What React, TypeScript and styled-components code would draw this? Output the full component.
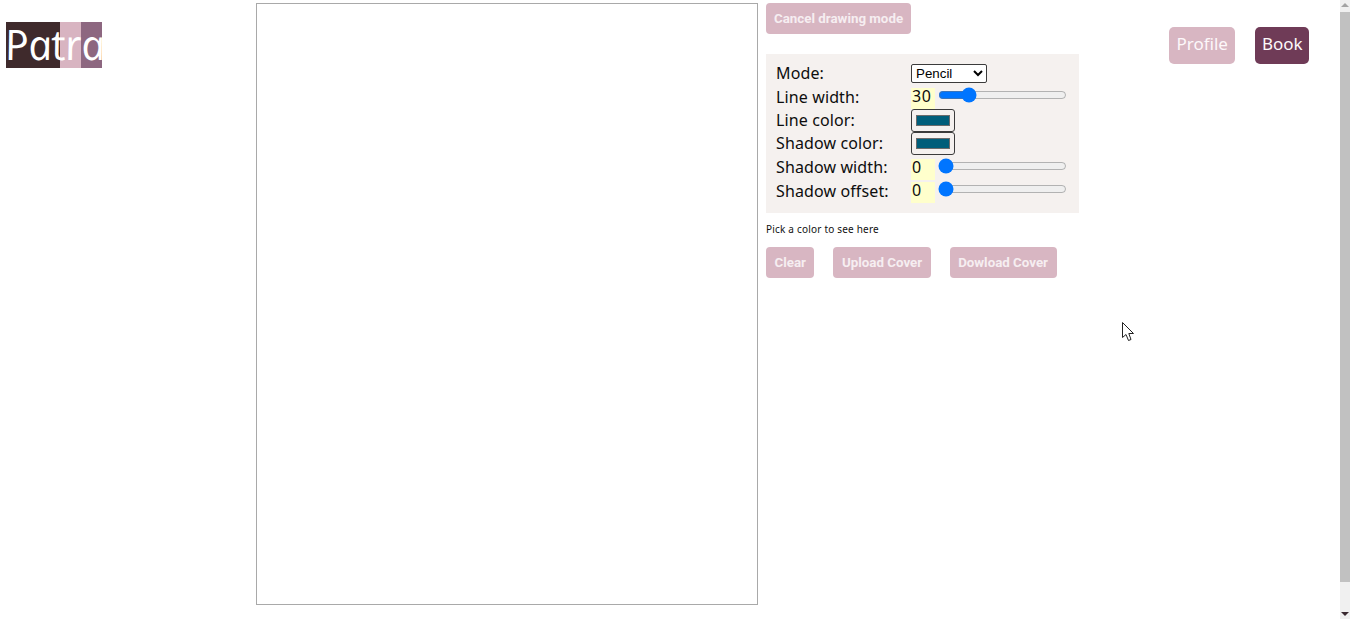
import React from "react";
import styled, { createGlobalStyle } from "styled-components";

const Global = createGlobalStyle`
  html, body { margin: 0; padding: 0; background: #fff; overflow: hidden; }
`;

const Page = styled.div`
  display: grid;
  grid-template-columns: 256px 502px 582px;
  width: 1340px;
  height: 619px;
`;

const LogoCell = styled.div`
  padding: 22px 0 0 6px;
`;

const Logo = styled.div`
  position: relative;
  display: flex;
  width: 96px;
  height: 46px;
`;

const Stripe = styled.div<{ $w: number; $c: string }>`
  width: ${(p) => p.$w}px;
  background: ${(p) => p.$c};
`;

const LogoText = styled.span`
  position: absolute;
  left: -2px;
  top: -4px;
  color: #fff;
  font: italic 400 42px/52px "Open Sans", sans-serif;
  letter-spacing: -0.4px;
  transform: skewX(11deg);
`;

const Canvas = styled.div`
  box-sizing: border-box;
  width: 502px;
  height: 602px;
  margin-top: 3px;
  border: 1px solid #a9a9a9;
  background: #fff;
`;

const Side = styled.div`
  display: grid;
  grid-template-columns: 403px 1fr;
  padding: 3px 0 0 8px;
  align-items: start;
`;

const Tools = styled.div`
  display: flex;
  flex-direction: column;
  align-items: flex-start;
`;

const ToolButton = styled.button`
  height: 31px;
  padding: 0 8px;
  border: 0;
  border-radius: 4px;
  background: #d8b6c2;
  color: #f6eef1;
  font: 700 13.33px "Roboto", sans-serif;
`;

const ActionButton = styled(ToolButton)`
  padding: 0 8.5px;
`;

const Panel = styled.div`
  box-sizing: border-box;
  width: 313px;
  height: 159px;
  margin-top: 20px;
  padding: 7.5px 10px 0;
  background: #f5f1ef;
`;

const Row = styled.div`
  display: grid;
  grid-template-columns: 135px 1fr;
  align-items: center;
  height: 23.5px;
`;

const Label = styled.label`
  color: #0d0d0d;
  font: 16px/23px "Noto Sans", sans-serif;
  letter-spacing: 0.12px;
`;

const Control = styled.div`
  display: flex;
  align-items: center;
`;

const ModeSelect = styled.select`
  box-sizing: border-box;
  width: 76px;
  height: 19px;
  margin-top: 1px;
  padding: 0;
  border: 1px solid #3b3b3b;
  border-radius: 2px;
  background: #fff;
  color: #000;
  font: 13.33px "Liberation Sans", sans-serif;
`;

const Value = styled.output`
  box-sizing: border-box;
  width: 24px;
  height: 21px;
  margin-top: 3px;
  padding-left: 1px;
  background: #ffffcc;
  color: #0d0d0d;
  font: 16px/17px "Noto Sans", sans-serif;
  letter-spacing: 0.6px;
`;

const Range = styled.input`
  width: 129px;
  height: 16px;
  margin: -4px 0 0 3px;
  accent-color: #0075ff;
`;

const Color = styled.input`
  box-sizing: border-box;
  width: 44px;
  height: 23px;
  padding: 5px 4px;
  border: 1px solid #3b3b3b;
  border-radius: 3px;
  background: #f5f1ef;

  &::-webkit-color-swatch-wrapper {
    padding: 0;
  }
  &::-webkit-color-swatch {
    border: 1px solid #6b6b6b;
    border-radius: 0;
  }
`;

const Hint = styled.p`
  margin: 10px 0 11px;
  color: #111;
  font: 10px/13px "Noto Sans", sans-serif;
  letter-spacing: 0.2px;
`;

const Actions = styled.div`
  display: flex;
  gap: 19px;
`;

const Nav = styled.nav`
  display: flex;
  justify-content: flex-end;
  gap: 20px;
  padding: 24px 31px 0 0;
`;

const NavButton = styled.button<{ $dark?: boolean }>`
  height: 37px;
  padding: 0 ${(p) => (p.$dark ? "6.5px" : "7.5px")} 5px;
  border: 0;
  border-radius: 5px;
  background: ${(p) => (p.$dark ? "#6f3b57" : "#d8b6c2")};
  color: #fdf8fa;
  font: 17px "Noto Sans", sans-serif;
`;

const Scrollbar = styled.div`
  position: fixed;
  top: 0;
  right: 0;
  display: flex;
  flex-direction: column;
  width: 10px;
  height: 619px;
  background: #f0f0f0;
`;

const ScrollThumb = styled.div`
  height: 570px;
  margin-top: 12px;
  background: #c1c1c1;
`;

const ArrowUp = styled.svg`
  position: absolute;
  top: 1px;
  left: 0;
`;

const ArrowDown = styled.svg`
  position: absolute;
  bottom: 1px;
  left: 0;
`;

const Cursor = styled.svg`
  position: fixed;
  left: 1122px;
  top: 322px;
`;

const rows = [
  { label: "Line color:", color: true },
  { label: "Shadow color:", color: true },
];

export default function App() {
  return (
    <>
      <Global />
      <Page>
        <LogoCell>
          <Logo>
            <Stripe $w={54} $c="#3f2a2c" />
            <Stripe $w={21} $c="#d8b4c1" />
            <Stripe $w={21} $c="#8d6780" />
            <LogoText>Patra</LogoText>
          </Logo>
        </LogoCell>
        <Canvas />
        <Side>
          <Tools>
            <ToolButton>Cancel drawing mode</ToolButton>
            <Panel>
              <Row>
                <Label>Mode:</Label>
                <Control>
                  <ModeSelect defaultValue="Pencil">
                    <option>Pencil</option>
                    <option>Circle</option>
                    <option>Spray</option>
                  </ModeSelect>
                </Control>
              </Row>
              <Row>
                <Label>Line width:</Label>
                <Control>
                  <Value>30</Value>
                  <Range type="range" min={0} max={150} defaultValue={30} />
                </Control>
              </Row>
              {rows.map((r) => (
                <Row key={r.label}>
                  <Label>{r.label}</Label>
                  <Control>
                    <Color type="color" defaultValue="#005e7a" />
                  </Control>
                </Row>
              ))}
              <Row>
                <Label>Shadow width:</Label>
                <Control>
                  <Value>0</Value>
                  <Range type="range" min={0} max={50} defaultValue={0} />
                </Control>
              </Row>
              <Row>
                <Label>Shadow offset:</Label>
                <Control>
                  <Value>0</Value>
                  <Range type="range" min={0} max={50} defaultValue={0} />
                </Control>
              </Row>
            </Panel>
            <Hint>Pick a color to see here</Hint>
            <Actions>
              <ActionButton>Clear</ActionButton>
              <ActionButton>Upload Cover</ActionButton>
              <ActionButton>Dowload Cover</ActionButton>
            </Actions>
          </Tools>
          <Nav>
            <NavButton>Profile</NavButton>
            <NavButton $dark>Book</NavButton>
          </Nav>
        </Side>
      </Page>
      <Scrollbar>
        <ArrowUp width="10" height="8" viewBox="0 0 10 8">
          <path d="M1 6 L5 2 L9 6 Z" fill="#a3a3a3" />
        </ArrowUp>
        <ScrollThumb />
        <ArrowDown width="10" height="8" viewBox="0 0 10 8">
          <path d="M1 2 L9 2 L5 6 Z" fill="#3a2a30" />
        </ArrowDown>
      </Scrollbar>
      <Cursor width="13" height="20" viewBox="0 0 13 20">
        <path
          d="M0.5 0.5 L0.5 15.5 L4 12.5 L6.5 18.5 L9 17.5 L6.8 11.5 L11.5 11.5 Z"
          fill="#fff"
          stroke="#222"
          strokeWidth="1"
        />
      </Cursor>
    </>
  );
}
